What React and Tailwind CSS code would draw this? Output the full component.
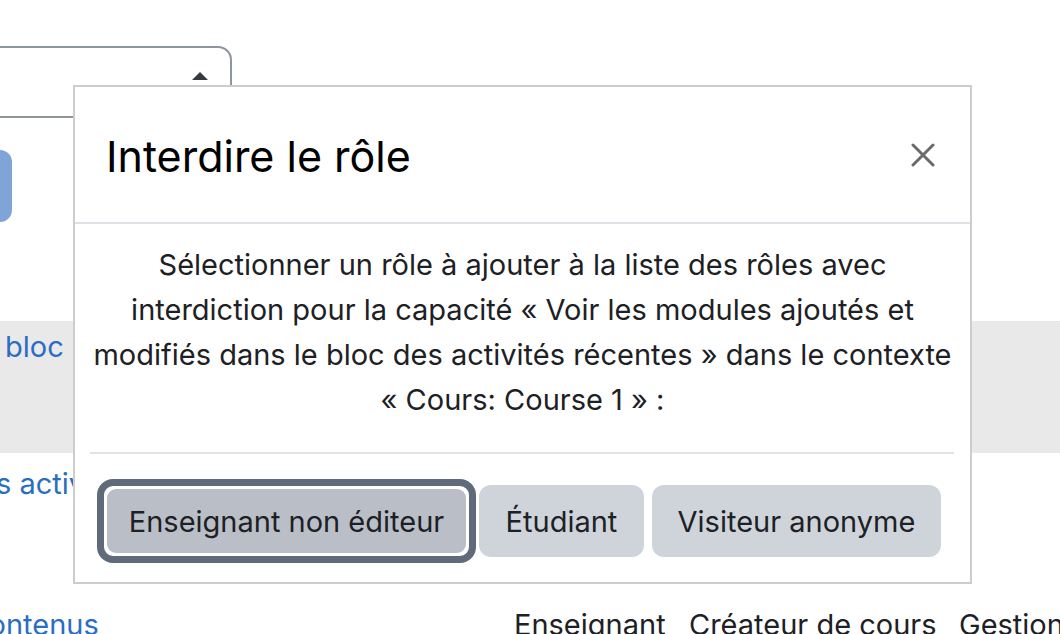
import React from "react";

const font = { fontFamily: "Inter, 'Noto Sans', sans-serif" };

function CloseIcon() {
  return (
    <svg width="24" height="24" viewBox="0 0 24 24" fill="none">
      <path d="M2 2 L22 22 M22 2 L2 22" stroke="#6a6a6a" strokeWidth="3" strokeLinecap="round" />
    </svg>
  );
}

function Modal() {
  return (
    <div className="absolute left-[73px] top-[85px] w-[899px] h-[499px] border-2 border-[#cdcdcd] bg-white flex flex-col">
      {/* header */}
      <div className="h-[137px] shrink-0 flex items-center justify-between pl-[31px] pr-[35px] border-b-2 border-[#dee2e6]">
        <h5 className="text-[43px] leading-none text-black pt-[3px]">Interdire le rôle</h5>
        <button className="w-[24px] h-[24px] flex items-center justify-center">
          <CloseIcon />
        </button>
      </div>

      {/* body */}
      <div className="pt-[18px] px-[15px]">
        <p className="text-center text-[29px] leading-[45px] text-[#1d2125] whitespace-nowrap">
          Sélectionner un rôle à ajouter à la liste des rôles avec
          <br />
          interdiction pour la capacité « Voir les modules ajoutés et
          <br />
          modifiés dans le bloc des activités récentes » dans le contexte
          <br />
          « Cours: Course 1 » :
        </p>
        <div className="mt-[30px] h-[2px] bg-[#e3e3e3] mr-[1px]"></div>
      </div>

      {/* role buttons */}
      <div className="pt-[25px] pl-[22px] flex items-center">
        <div className="border-[7px] border-[#5f6b7a] rounded-[16px] p-[3px] bg-white">
          <button className="w-[359px] h-[64px] pt-[2px] rounded-[9px] bg-[#babfc7] text-[29px] text-[#1d2125] flex items-center justify-center whitespace-nowrap">
            Enseignant non éditeur
          </button>
        </div>
        <button className="ml-[3px] w-[165px] h-[72px] pt-[2px] rounded-[12px] bg-[#ced4da] text-[29px] text-[#1d2125] flex items-center justify-center">
          Étudiant
        </button>
        <button className="ml-[8px] w-[289px] h-[72px] pt-[2px] rounded-[12px] bg-[#ced4da] text-[29px] text-[#1d2125] flex items-center justify-center whitespace-nowrap">
          Visiteur anonyme
        </button>
      </div>
    </div>
  );
}

export default function App() {
  return (
    <div className="relative w-[1060px] h-[634px] overflow-hidden bg-white" style={font}>
      {/* page behind the dialog */}
      <div className="pt-[46px]">
        <div className="relative -ml-[68px] w-[300px] h-[72px] border-2 border-[#8f959e] rounded-[14px]">
          <div className="absolute left-[258px] top-[24px] w-0 h-0 border-l-[8px] border-r-[8px] border-b-[8px] border-l-transparent border-r-transparent border-b-[#343a40]"></div>
        </div>
        <div className="mt-[32px] -ml-[48px] w-[60px] h-[72px] rounded-[12px] bg-[#7fa5d8]"></div>
        <div className="mt-[99px] h-[132px] bg-[#e9e9e9] pl-[5px] pt-[3px]">
          <span className="inline-block w-[68px] overflow-hidden whitespace-nowrap align-top text-[29px] leading-[45px] text-[#2a6ec4]">bloc des</span>
        </div>
        <div className="mt-[8px] -ml-[4px] w-[77px] overflow-hidden whitespace-nowrap text-[29px] leading-[45px] text-[#2a6ec4]">s activités</div>
        <div className="mt-[96px] flex items-center text-[29px] leading-[45px] whitespace-nowrap">
          <span className="-ml-[28px] w-[542px] shrink-0 text-[#2a6ec4]">contenus</span>
          <span className="w-[175px] shrink-0 text-[#1d2125]">Enseignant</span>
          <span className="w-[270px] shrink-0 text-[#1d2125]">Créateur de cours</span>
          <span className="text-[#1d2125]">Gestionnaire</span>
        </div>
      </div>

      <Modal />
    </div>
  );
}
